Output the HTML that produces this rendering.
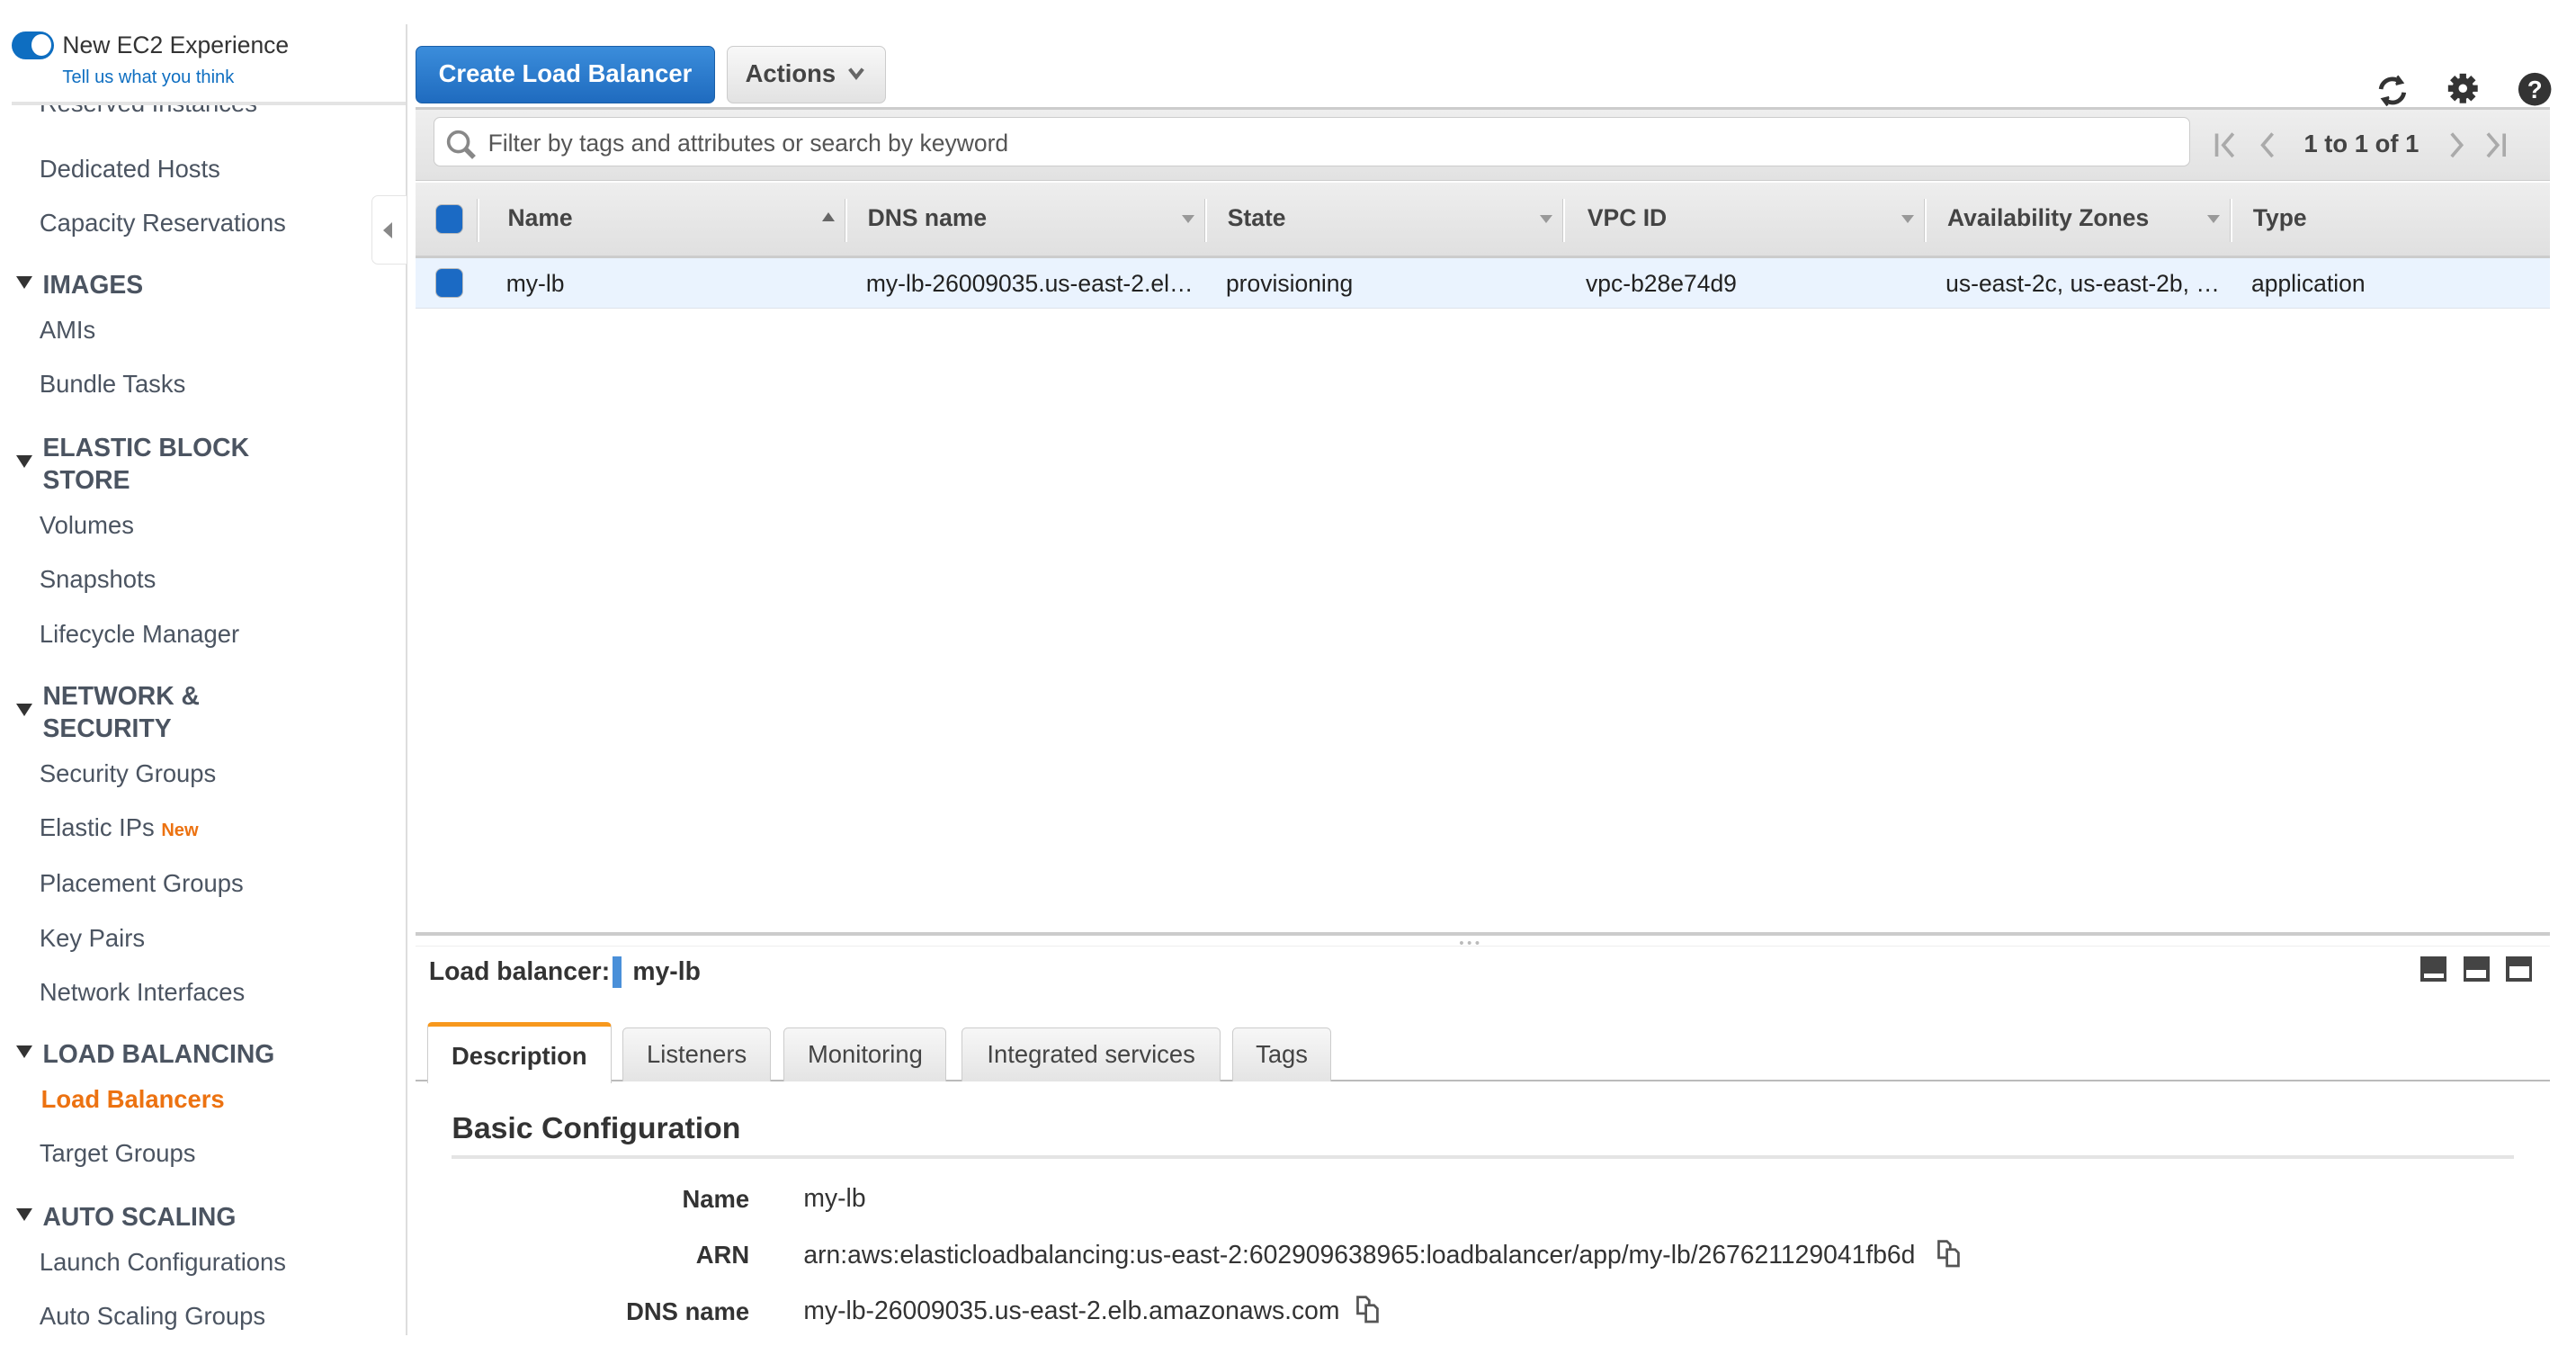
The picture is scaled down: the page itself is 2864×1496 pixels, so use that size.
<!DOCTYPE html>
<html><head><meta charset="utf-8"><style>
html,body{margin:0;padding:0;background:#fff;}
body{width:1568px;height:819px;zoom:1.827;position:relative;overflow:hidden;font-family:"Liberation Sans",Arial,sans-serif;color:#444;}
.a{position:absolute;white-space:nowrap;}
.si{position:absolute;left:24px;font-size:15px;color:#4b5461;line-height:18px;}
.sh{position:absolute;left:26px;font-size:15.5px;font-weight:bold;color:#4b5461;line-height:20px;}
.tri{position:absolute;left:10px;width:0;height:0;border-left:5px solid transparent;border-right:5px solid transparent;border-top:8px solid #333;}
.th{position:absolute;top:124px;font-size:14.5px;font-weight:bold;color:#444;}
.td{position:absolute;top:164px;font-size:14.5px;color:#222;}
.sep{position:absolute;top:121px;width:1px;height:26px;background:#fff;border-left:1px solid #ccc;}
.arr{position:absolute;top:131px;width:0;height:0;border-left:4px solid transparent;border-right:4px solid transparent;border-top:5px solid #999;}
.tab{position:absolute;top:625px;height:33px;box-sizing:border-box;border:1px solid #ccc;border-bottom:none;border-radius:3px 3px 0 0;background:linear-gradient(#f7f7f7,#e4e4e4);font-size:15px;color:#444;text-align:center;line-height:32px;}
.lbl{position:absolute;right:1112px;font-size:15px;font-weight:bold;color:#333;}
.val{position:absolute;left:489px;font-size:15.5px;color:#333;}
</style></head><body>
<!-- sidebar -->
<div class="a" style="left:247px;top:15px;width:1px;height:797px;background:#ddd"></div>
<div class="a" style="left:7px;top:19px;width:26px;height:17px;border-radius:9px;background:#0e6ec1"></div>
<div class="a" style="left:19px;top:21px;width:12px;height:13px;border-radius:50%;background:#fff"></div>
<div class="a" style="left:38px;top:19px;font-size:14.5px;color:#333">New EC2 Experience</div>
<div class="a" style="left:38px;top:41px;font-size:11px;color:#0e6ec1">Tell us what you think</div>
<div class="a" style="left:7px;top:62px;width:240px;height:2px;background:#e4e4e4"></div>
<div style="position:absolute;left:0;top:64px;width:246px;height:14px;overflow:hidden"><div class="si" style="top:-10px">Reserved Instances</div></div>
<div class="si" style="top:94px">Dedicated Hosts</div>
<div class="si" style="top:127px">Capacity Reservations</div>
<div class="a" style="left:226px;top:119px;width:21px;height:41px;background:#fff;border:1px solid #e4e4e4;border-right:none;border-radius:4px 0 0 4px"></div>
<div class="a" style="left:233px;top:135px;width:0;height:0;border-top:5px solid transparent;border-bottom:5px solid transparent;border-right:6px solid #888"></div>
<div class="tri" style="top:168px"></div><div class="sh" style="top:163px">IMAGES</div>
<div class="si" style="top:192px">AMIs</div>
<div class="si" style="top:225px">Bundle Tasks</div>
<div class="tri" style="top:277px"></div><div class="sh" style="top:262px">ELASTIC BLOCK<br>STORE</div>
<div class="si" style="top:311px">Volumes</div>
<div class="si" style="top:344px">Snapshots</div>
<div class="si" style="top:377px">Lifecycle Manager</div>
<div class="tri" style="top:428px"></div><div class="sh" style="top:413px">NETWORK &amp;<br>SECURITY</div>
<div class="si" style="top:462px">Security Groups</div>
<div class="si" style="top:495px">Elastic IPs <span style="font-size:11px;color:#ec7211;font-weight:bold">New</span></div>
<div class="si" style="top:529px">Placement Groups</div>
<div class="si" style="top:562px">Key Pairs</div>
<div class="si" style="top:595px">Network Interfaces</div>
<div class="tri" style="top:636px"></div><div class="sh" style="top:631px">LOAD BALANCING</div>
<div class="si" style="top:660px;left:25px;color:#ec7211;font-weight:bold">Load Balancers</div>
<div class="si" style="top:693px">Target Groups</div>
<div class="tri" style="top:735px"></div><div class="sh" style="top:730px">AUTO SCALING</div>
<div class="si" style="top:759px">Launch Configurations</div>
<div class="si" style="top:792px">Auto Scaling Groups</div>

<!-- top buttons -->
<div class="a" style="left:253px;top:28px;width:182px;height:35px;box-sizing:border-box;border:1px solid #1a5fa8;border-radius:4px;background:linear-gradient(#3b8ddb,#1f6bbf);color:#fff;font-weight:bold;font-size:15px;text-align:center;line-height:33px">Create Load Balancer</div>
<div class="a" style="left:442px;top:28px;width:97px;height:35px;box-sizing:border-box;border:1px solid #ccc;border-radius:4px;background:linear-gradient(#f8f8f8,#e2e2e2);color:#444;font-weight:bold;font-size:15px;line-height:33px;padding-left:11px">Actions</div>
<svg class="a" style="left:515px;top:40px" width="12" height="10" viewBox="0 0 12 10" fill="none" stroke="#666" stroke-width="2.2"><path d="M2 2l4 5 4-5"/></svg>
<svg class="a" style="left:1444px;top:43px" width="24" height="24" viewBox="0 0 24 24" fill="none" stroke="#333" stroke-width="2.6"><path d="M5 11a7 7 0 0 1 12-4"/><path d="M19 13a7 7 0 0 1-12 4"/><path d="M15 3l3 4-4 1" fill="#333" stroke-width="1.5"/><path d="M9 21l-3-4 4-1" fill="#333" stroke-width="1.5"/></svg>
<svg class="a" style="left:1489px;top:44px" width="20" height="20" viewBox="0 0 20 20"><g fill="#333"><circle cx="10" cy="10" r="6.5"/><rect x="8" y="1" width="4" height="18"/><rect x="1" y="8" width="18" height="4"/><rect x="8" y="1" width="4" height="18" transform="rotate(45 10 10)"/><rect x="8" y="1" width="4" height="18" transform="rotate(-45 10 10)"/></g><circle cx="10" cy="10" r="2.6" fill="#fff"/></svg>
<svg class="a" style="left:1532px;top:44px" width="21" height="21" viewBox="0 0 21 21"><circle cx="10.5" cy="10.5" r="10" fill="#333"/><text x="10.5" y="16" text-anchor="middle" font-family="Liberation Sans" font-weight="bold" font-size="15" fill="#fff">?</text></svg>

<!-- toolbar -->
<div class="a" style="left:253px;top:65px;width:1299px;height:45px;background:linear-gradient(#eee,#e2e2e2);border-top:2px solid #ccc;border-bottom:1px solid #ccc;box-sizing:border-box"></div>
<div class="a" style="left:264px;top:71px;width:1069px;height:30px;box-sizing:border-box;border:1px solid #ccc;border-radius:4px;background:#fff"></div>
<svg class="a" style="left:271px;top:78px" width="20" height="20" viewBox="0 0 20 20" fill="none" stroke="#888" stroke-width="2"><circle cx="8" cy="8" r="6"/><path d="M12.5 12.5l5 5" stroke-width="3"/></svg>
<div class="a" style="left:297px;top:79px;font-size:14.5px;color:#555">Filter by tags and attributes or search by keyword</div>
<svg class="a" style="left:1346px;top:78px" width="180" height="20" viewBox="0 0 180 20" fill="none" stroke="#aaa" stroke-width="2"><path d="M3 3v14M13 3l-6 7 6 7"/><path d="M37 3l-6 7 6 7"/><path d="M146 3l6 7-6 7"/><path d="M168 3l6 7-6 7M178 3v14"/></svg>
<div class="a" style="left:1402px;top:79px;font-size:15px;font-weight:bold;color:#444">1 to 1 of 1</div>

<!-- table header -->
<div class="a" style="left:253px;top:111px;width:1299px;height:46px;background:linear-gradient(#eee,#e0e0e0);border-bottom:2px solid #ccc;box-sizing:border-box"></div>
<div class="a" style="left:265px;top:124px;width:16px;height:17px;border-radius:4px;background:#1b6ac4;border:1px solid #bbb"></div>
<div class="sep" style="left:290px"></div>
<div class="th" style="left:309px">Name</div><div class="a" style="left:500px;top:129px;border-left:4px solid transparent;border-right:4px solid transparent;border-bottom:6px solid #666"></div>
<div class="sep" style="left:514px"></div>
<div class="th" style="left:528px">DNS name</div><div class="arr" style="left:719px"></div>
<div class="sep" style="left:733px"></div>
<div class="th" style="left:747px">State</div><div class="arr" style="left:937px"></div>
<div class="sep" style="left:951px"></div>
<div class="th" style="left:966px">VPC ID</div><div class="arr" style="left:1157px"></div>
<div class="sep" style="left:1171px"></div>
<div class="th" style="left:1185px">Availability Zones</div><div class="arr" style="left:1343px"></div>
<div class="sep" style="left:1357px"></div>
<div class="th" style="left:1371px">Type</div>
<!-- row -->
<div class="a" style="left:253px;top:157px;width:1299px;height:31px;background:#eaf3fe;border-bottom:1px solid #dde3ea;box-sizing:border-box"></div>
<div class="a" style="left:265px;top:163px;width:16px;height:17px;border-radius:4px;background:#1b6ac4;border:1px solid #bbb"></div>
<div class="td" style="left:308px">my-lb</div>
<div class="td" style="left:527px">my-lb-26009035.us-east-2.el…</div>
<div class="td" style="left:746px">provisioning</div>
<div class="td" style="left:965px">vpc-b28e74d9</div>
<div class="td" style="left:1184px">us-east-2c, us-east-2b, …</div>
<div class="td" style="left:1370px">application</div>

<!-- splitter -->
<div class="a" style="left:253px;top:567px;width:1299px;height:2px;background:#ccc"></div>
<div class="a" style="left:253px;top:575px;width:1299px;height:1px;background:#eee"></div>
<div class="a" style="left:888px;top:570px;font-size:8px;color:#bbb;letter-spacing:2px">&bull;&bull;&bull;</div>

<!-- detail -->
<div class="a" style="left:261px;top:582px;font-size:15.5px;font-weight:bold;color:#333">Load balancer:</div>
<div class="a" style="left:373px;top:582px;width:5px;height:19px;background:#4a90d9"></div>
<div class="a" style="left:385px;top:582px;font-size:15.5px;font-weight:bold;color:#333">my-lb</div>
<div class="a" style="left:1473px;top:582px;width:16px;height:15px;background:#444"><div style="position:absolute;left:2px;top:10px;width:12px;height:3px;background:#fff"></div></div>
<div class="a" style="left:1499px;top:582px;width:16px;height:15px;background:#444"><div style="position:absolute;left:2px;top:8px;width:12px;height:5px;background:#fff"></div></div>
<div class="a" style="left:1525px;top:582px;width:16px;height:15px;background:#444"><div style="position:absolute;left:2px;top:6px;width:12px;height:7px;background:#fff"></div></div>

<div class="a" style="left:253px;top:657px;width:1299px;height:1px;background:#bbb"></div>
<div class="tab" style="left:260px;top:622px;width:112px;height:37px;background:#fff;border-top:3px solid #f7981d;font-weight:bold;color:#333;line-height:36px">Description</div>
<div class="tab" style="left:379px;width:90px">Listeners</div>
<div class="tab" style="left:477px;width:99px">Monitoring</div>
<div class="tab" style="left:585px;width:158px">Integrated services</div>
<div class="tab" style="left:750px;width:60px">Tags</div>

<div class="a" style="left:275px;top:676px;font-size:18.5px;font-weight:bold;color:#333">Basic Configuration</div>
<div class="a" style="left:275px;top:703px;width:1255px;height:2px;background:#e4e4e4"></div>
<div class="lbl" style="top:721px">Name</div><div class="val" style="top:720px">my-lb</div>
<div class="lbl" style="top:755px">ARN</div><div class="val" style="top:754px">arn:aws:elasticloadbalancing:us-east-2:602909638965:loadbalancer/app/my-lb/267621129041fb6d</div>
<svg class="a" style="left:1177px;top:753px" width="18" height="18" viewBox="0 0 18 18" fill="#fff" stroke="#555" stroke-width="1.5"><path d="M3 2h5l2 2v8H3z"/><path d="M8 7h5l2 2v8H8z"/></svg>
<div class="lbl" style="top:789px">DNS name</div><div class="val" style="top:788px">my-lb-26009035.us-east-2.elb.amazonaws.com</div>
<svg class="a" style="left:823px;top:787px" width="18" height="18" viewBox="0 0 18 18" fill="#fff" stroke="#555" stroke-width="1.5"><path d="M3 2h5l2 2v8H3z"/><path d="M8 7h5l2 2v8H8z"/></svg>
</body></html>
